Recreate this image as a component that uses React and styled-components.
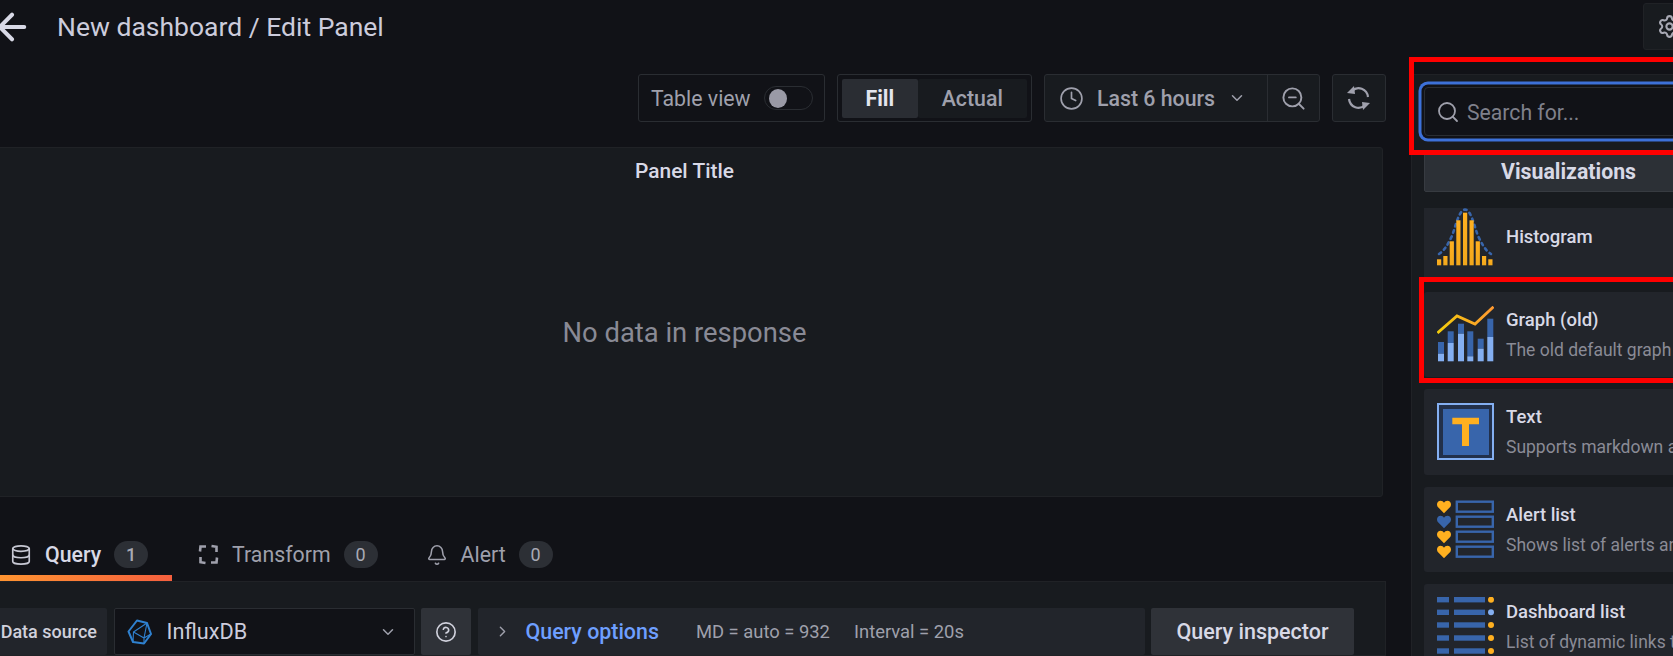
import React from "react";
import styled, { createGlobalStyle } from "styled-components";
import {
  ArrowLeft,
  Bell,
  ChevronDown,
  ChevronRight,
  Clock,
  CircleHelp,
  Database,
  Search,
  Settings,
  ZoomOut,
} from "lucide-react";

const GlobalStyle = createGlobalStyle`
  html, body {
    margin: 0;
    background: #111217;
    overflow: hidden;
  }
  * {
    box-sizing: border-box;
  }
`;

const Page = styled.div`
  position: relative;
  width: 1673px;
  height: 656px;
  overflow: hidden;
  background: #111217;
  color: #ccccdc;
  font-family: Roboto, "Liberation Sans", sans-serif;
`;

const Header = styled.header`
  display: flex;
  align-items: flex-start;
  height: 74px;
`;

const BackButton = styled.div`
  display: flex;
  margin: 6px 24px 0 -9px;
  color: #d8d9e6;
`;

const Title = styled.h1`
  margin: 10px 0 0;
  font-size: 26.5px;
  font-weight: 400;
  line-height: 34px;
  color: #ccccdc;
`;

const SettingsButton = styled.div`
  display: flex;
  align-items: center;
  flex-shrink: 0;
  width: 60px;
  height: 47px;
  margin: 3px -30px 0 auto;
  padding-left: 13px;
  background: #181b1f;
  border: 1px solid #202226;
  border-radius: 3px;
  color: #a8a9b4;
`;

const Main = styled.div`
  display: flex;
  gap: 25px;
  height: 582px;
`;

const LeftColumn = styled.div`
  display: flex;
  flex-direction: column;
  flex-shrink: 0;
  width: 1400px;
  margin-left: -14px;
`;

const Toolbar = styled.div`
  display: flex;
  justify-content: flex-end;
  gap: 12px;
  height: 48px;
  margin-bottom: 25px;
`;

const ToolBox = styled.div`
  display: flex;
  align-items: center;
  width: ${(p) => p.$width}px;
  background: #181b1f;
  border: 1px solid #2a2d32;
  border-radius: 3px;
  font-size: 21.3px;
  font-weight: 500;
  color: #9fa0ac;
`;

const TableView = styled(ToolBox)`
  padding-left: 12px;
  background: #111217;
  font-weight: 400;
`;

const Switch = styled.div`
  display: flex;
  align-items: center;
  width: 49px;
  height: 24px;
  margin-left: 13px;
  padding-left: 4px;
  border: 1px solid #2a2d32;
  border-radius: 12px;
  &::before {
    content: "";
    width: 18px;
    height: 19px;
    border-radius: 50%;
    background: #9a9aa6;
  }
`;

const ToggleGroup = styled(ToolBox)`
  padding: 4px;
  background: #111217;
`;

const ToggleOption = styled.div`
  display: flex;
  align-items: center;
  justify-content: center;
  width: ${(p) => (p.$active ? 76 : 110)}px;
  height: 39px;
  border-radius: 2px;
  background: ${(p) => (p.$active ? "#2a2d33" : "#181b1f")};
  color: ${(p) => (p.$active ? "#e4e5ee" : "#9fa0ac")};
  font-weight: ${(p) => (p.$active ? 700 : 500)};
`;

const TimePicker = styled.div`
  display: flex;
  align-items: center;
  gap: 13px;
  width: 223px;
  height: 100%;
  padding-left: 14px;
  border-right: 1px solid #2a2d32;
`;

const ZoomButton = styled.div`
  display: flex;
  align-items: center;
  justify-content: center;
  flex: 1;
`;

const RefreshBox = styled(ToolBox)`
  justify-content: center;
`;

const Panel = styled.section`
  height: 349.5px;
  margin-right: 3px;
  padding-top: 11px;
  background: #181b1f;
  border: 1px solid #202226;
  border-radius: 3px;
  text-align: center;
`;

const PanelTitle = styled.div`
  font-size: 20.9px;
  font-weight: 500;
  line-height: 24px;
  color: #d8d9e6;
`;

const NoData = styled.div`
  margin-top: 134px;
  font-size: 27.4px;
  line-height: 32px;
  color: #898a95;
`;

const TabBar = styled.nav`
  display: flex;
  align-items: flex-end;
  gap: 4px;
  height: 84.5px;
  padding-left: 2px;
`;

const Tab = styled.div`
  display: flex;
  align-items: center;
  height: 47px;
  padding: 0 ${(p) => (p.$active ? 24 : 22)}px 0 22px;
  border-bottom: 6px solid transparent;
  border-image: ${(p) =>
    p.$active ? "linear-gradient(90deg, #ff9830, #f55f3e) 1" : "none"};
  font-size: 21.3px;
  font-weight: ${(p) => (p.$active ? 500 : 400)};
  color: ${(p) => (p.$active ? "#d8d9e6" : "#9fa0ac")};
  svg {
    margin-right: 13px;
    color: ${(p) => (p.$active ? "#c8c9d4" : "#9fa0ac")};
  }
`;

const Badge = styled.span`
  display: flex;
  align-items: center;
  justify-content: center;
  width: 34px;
  height: 27px;
  margin-left: 13px;
  border-radius: 14px;
  background: #2c2f35;
  font-size: 18px;
  color: #a9aab5;
`;

const TabContent = styled.div`
  flex: 1;
  padding: 26px 31px 0 1px;
  background: #181b1f;
  border: 1px solid #202226;
`;

const QueryRow = styled.div`
  display: flex;
  gap: 6.5px;
  height: 47px;
  font-size: 18px;
`;

const SourceLabel = styled.div`
  display: flex;
  align-items: center;
  justify-content: flex-end;
  width: 119px;
  padding-right: 10px;
  background: #22252b;
  border-radius: 2px;
  font-weight: 500;
  color: #d0d1dc;
`;

const SourceSelect = styled.div`
  display: flex;
  align-items: center;
  width: 301px;
  padding: 0 17px 0 12px;
  background: #111217;
  border: 1px solid #2a2d32;
  border-radius: 2px;
  font-size: 21.7px;
  color: #ccccdc;
  span {
    margin-left: 15px;
    flex: 1;
  }
`;

const HelpButton = styled.div`
  display: flex;
  align-items: center;
  justify-content: center;
  width: 50px;
  background: #2f3238;
  border-radius: 2px;
  color: #d0d1dc;
`;

const QueryOptions = styled.div`
  display: flex;
  align-items: center;
  flex: 1;
  padding-left: 16px;
  background: #22252b;
  border-radius: 2px;
  color: #9fa0ac;
`;

const OptionsLink = styled.span`
  margin: 0 37px 0 15px;
  font-size: 21.4px;
  font-weight: 500;
  color: #6e9fff;
`;

const OptionsInfo = styled.span`
  margin-right: 24px;
  font-size: 18.4px;
  color: #9fa0ac;
`;

const InspectorButton = styled.div`
  display: flex;
  align-items: center;
  justify-content: center;
  width: 203px;
  background: #2f3238;
  border-radius: 2px;
  font-size: 21.5px;
  font-weight: 500;
  color: #d8d9e6;
`;

const Sidebar = styled.aside`
  flex-shrink: 0;
  width: 320px;
  padding: 12px 0 0 12px;
  background: #181b1f;
  border-top: 1px solid #202226;
  border-left: 1px solid #202226;
`;

const SearchBox = styled.div`
  display: flex;
  align-items: center;
  height: 49px;
  padding: 1px 0 0 11px;
  background: #111217;
  border: 1px solid #2a2d32;
  border-radius: 4px;
  box-shadow: 0 0 0 2.5px #111217, 0 0 0 5.5px #3d71d9;
  font-size: 21.2px;
  color: #7f808b;
  svg {
    margin-right: 7px;
    color: #9fa0ac;
  }
`;

const VizTab = styled.div`
  display: flex;
  align-items: center;
  justify-content: center;
  width: 289px;
  height: 39px;
  margin-top: 17px;
  padding-bottom: 2px;
  background: #2c3036;
  border: 1px solid #373b41;
  border-radius: 2px;
  font-size: 21.3px;
  font-weight: 700;
  color: #d8d9e6;
`;

const CardViewport = styled.div`
  height: 448px;
  margin-top: 16px;
  overflow: hidden;
`;

const CardList = styled.div`
  display: flex;
  flex-direction: column;
  gap: 12px;
  margin-top: -14px;
`;

const Card = styled.div`
  display: flex;
  align-items: center;
  flex-shrink: 0;
  height: 85.5px;
  padding-left: 13px;
  background: #22252b;
  border-radius: 3px;
  svg {
    flex-shrink: 0;
    margin-right: 12px;
  }
`;

const CardName = styled.div`
  font-size: 18.5px;
  font-weight: 500;
  line-height: 24px;
  color: #d8d9e6;
`;

const CardDesc = styled.div`
  margin-top: 7px;
  font-size: 17.5px;
  line-height: 22px;
  white-space: nowrap;
  color: #8a8b96;
`;

// the red boxes somebody drew on top of the screenshot
const Highlight = styled.div`
  position: absolute;
  top: ${(p) => p.$top}px;
  left: ${(p) => p.$left}px;
  width: 320px;
  height: ${(p) => p.$height}px;
  border: 5px solid #ff0000;
  pointer-events: none;
`;

const HistogramIcon = () => {
  const xs = [2, 8.3, 14.7, 21.3, 28, 34.5, 40.7, 47, 53.3];
  const tops = [51.3, 48, 33.3, 12.3, 4.7, 12.3, 33.3, 48, 51.3];
  return (
    <svg width="57" height="58" viewBox="0 0 57 58">
      <defs>
        <linearGradient id="histFill" x1="0" y1="0" x2="0" y2="1">
          <stop offset="0" stopColor="#ffb020" />
          <stop offset="1" stopColor="#f2a81c" />
        </linearGradient>
      </defs>
      <path
        d="M2 46 C8 42 11 36 15 28 C19 17 22 2 28 1.5 C34 2 37 17 41 28 C45 36 48 42 54 46"
        fill="none"
        stroke="#3865ab"
        strokeWidth="2.6"
        strokeLinecap="round"
        strokeDasharray="2.5 4"
      />
      {xs.map((x, i) => (
        <rect key={x} x={x - 2} y={tops[i]} width="4.2" height={57.3 - tops[i]} fill="url(#histFill)" />
      ))}
    </svg>
  );
};

const GraphIcon = () => {
  const bars = [
    [4, 36, 47.7],
    [13.7, 25.3, 37],
    [24, 17.7, 27.7],
    [33.3, 25.3, 50.3],
    [43.7, 32.7, 42.7],
    [53.3, 12.7, 31],
  ];
  return (
    <svg width="57" height="56" viewBox="0 0 57 56">
      <defs>
        <linearGradient id="graphLine" x1="0" y1="0" x2="1" y2="0">
          <stop offset="0" stopColor="#f2cc0c" />
          <stop offset="1" stopColor="#ff9830" />
        </linearGradient>
      </defs>
      {bars.map(([x, top, light]) => (
        <g key={x}>
          <rect x={x - 3} y={top} width="6" height={light - top} fill="#3865ab" />
          <rect x={x - 3} y={light} width="6" height={55.3 - light} fill="#84aff1" />
        </g>
      ))}
      <path d="M0.5 27 L20 10 L38 18 L56.5 0.8" fill="none" stroke="url(#graphLine)" strokeWidth="2.8" />
    </svg>
  );
};

const TextIcon = () => (
  <svg width="57" height="57" viewBox="0 0 57 57">
    <rect x="1" y="1" width="55" height="55" fill="#22304a" stroke="#84aff1" strokeWidth="2" />
    <rect x="6" y="6" width="46" height="46" fill="#3865ab" />
    <path d="M15.3 14.7 H42 V21.3 H32 V43 H25 V21.3 H15.3 Z" fill="#ffb020" />
  </svg>
);

const Heart = ({ y, color }) => (
  <path
    d={`M7 ${y + 6.5} L0.6 ${y} C-1 ${y - 3} 0.8 ${y - 6} 3.6 ${y - 6} C5 ${y - 6} 6.4 ${y - 5.2} 7 ${y - 4} C7.6 ${y - 5.2} 9 ${y - 6} 10.4 ${y - 6} C13.2 ${y - 6} 15 ${y - 3} 13.4 ${y} Z`}
    fill={color}
  />
);

const AlertListIcon = () => (
  <svg width="57" height="58" viewBox="0 0 57 58">
    {[6.7, 21.7, 36.7, 51.7].map((y, i) => (
      <g key={y}>
        <Heart y={y} color={i === 1 ? "#3865ab" : "#ffb020"} />
        <rect x="19.8" y={y - 5} width="36" height="10" fill="none" stroke="#3865ab" strokeWidth="2.4" />
      </g>
    ))}
  </svg>
);

const DashListIcon = () => (
  <svg width="57" height="60" viewBox="0 0 57 60">
    {[2.7, 15.3, 28, 41, 54].map((y, i) => (
      <g key={y}>
        <rect x="0" y={y - 2.7} width="12" height="5.4" fill="#3865ab" />
        <rect x="17" y={y - 2.7} width="31" height="5.4" fill="#3865ab" />
        <circle cx="54" cy={y} r="3" fill={i === 1 ? "#84aff1" : "#ffb020"} />
      </g>
    ))}
  </svg>
);

const TransformIcon = () => (
  <svg width="21" height="21" viewBox="0 0 21 21" fill="none" stroke="currentColor" strokeWidth="2.6">
    <path d="M2 7.5 L2.5 2.5 H8" />
    <path d="M13.5 2 L18.5 2.8 V8" />
    <path d="M19 13.5 L18.5 18.5 H13" />
    <path d="M7.5 19 L2.5 18.2 V13" />
  </svg>
);

const InfluxIcon = () => (
  <svg width="25" height="26" viewBox="0 0 25 26" fill="none" stroke="#2f81d0" strokeWidth="2" strokeLinejoin="round">
    <path d="M10 1.5 L20 4 L24 15 L17 24.5 L6 23 L1.5 12.5 Z" />
    <path d="M6.5 13 L17 19 L20 4 Z M6.5 13 L6 23 M17 19 L17 24.5 M17 19 L24 15" strokeWidth="1.1" />
  </svg>
);

const SyncIcon = () => (
  <svg width="26" height="27" viewBox="0 0 26 27" fill="none" stroke="#9fa0ac" strokeWidth="2.2">
    <path d="M22 12 A9.5 10 0 0 0 6 6" />
    <path d="M3 14 A9.5 10 0 0 0 19 20" />
    <path d="M1 8 L8 1 L9 9 Z" fill="#9fa0ac" stroke="none" />
    <path d="M24 18 L17 25 L16 17 Z" fill="#9fa0ac" stroke="none" />
  </svg>
);

const cards = [
  { name: "Histogram", icon: <HistogramIcon /> },
  { name: "Graph (old)", desc: "The old default graph panel", icon: <GraphIcon /> },
  { name: "Text", desc: "Supports markdown and html content", icon: <TextIcon /> },
  { name: "Alert list", desc: "Shows list of alerts and their current status", icon: <AlertListIcon /> },
  { name: "Dashboard list", desc: "List of dynamic links to other dashboards", icon: <DashListIcon /> },
];

const App = () => {
  return (
    <Page>
      <GlobalStyle />
      <Header>
        <BackButton>
          <ArrowLeft size={42} strokeWidth={2.3} />
        </BackButton>
        <Title>New dashboard / Edit Panel</Title>
        <SettingsButton>
          <Settings size={25} />
        </SettingsButton>
      </Header>
      <Main>
        <LeftColumn>
          <Toolbar>
            <TableView $width={187}>
              Table view
              <Switch />
            </TableView>
            <ToggleGroup $width={195}>
              <ToggleOption $active>Fill</ToggleOption>
              <ToggleOption>Actual</ToggleOption>
            </ToggleGroup>
            <ToolBox $width={276}>
              <TimePicker>
                <Clock size={25} strokeWidth={1.6} />
                Last 6 hours
                <ChevronDown size={18} />
              </TimePicker>
              <ZoomButton>
                <ZoomOut size={27} strokeWidth={1.7} />
              </ZoomButton>
            </ToolBox>
            <RefreshBox $width={54}>
              <SyncIcon />
            </RefreshBox>
          </Toolbar>
          <Panel>
            <PanelTitle>Panel Title</PanelTitle>
            <NoData>No data in response</NoData>
          </Panel>
          <TabBar>
            <Tab $active>
              <Database size={22} strokeWidth={1.8} />
              Query
              <Badge>1</Badge>
            </Tab>
            <Tab>
              <TransformIcon />
              Transform
              <Badge>0</Badge>
            </Tab>
            <Tab>
              <Bell size={22} strokeWidth={1.7} />
              Alert
              <Badge>0</Badge>
            </Tab>
          </TabBar>
          <TabContent>
            <QueryRow>
              <SourceLabel>Data source</SourceLabel>
              <SourceSelect>
                <InfluxIcon />
                <span>InfluxDB</span>
                <ChevronDown size={18} color="#9fa0ac" />
              </SourceSelect>
              <HelpButton>
                <CircleHelp size={22} strokeWidth={1.8} />
              </HelpButton>
              <QueryOptions>
                <ChevronRight size={17} />
                <OptionsLink>Query options</OptionsLink>
                <OptionsInfo>MD = auto = 932</OptionsInfo>
                <OptionsInfo>Interval = 20s</OptionsInfo>
              </QueryOptions>
              <InspectorButton>Query inspector</InspectorButton>
            </QueryRow>
          </TabContent>
        </LeftColumn>
        <Sidebar>
          <SearchBox>
            <Search size={24} strokeWidth={1.8} />
            Search for...
          </SearchBox>
          <VizTab>Visualizations</VizTab>
          <CardViewport>
            <CardList>
              {cards.map((card) => (
                <Card key={card.name}>
                  {card.icon}
                  <div>
                    <CardName>{card.name}</CardName>
                    {card.desc && <CardDesc>{card.desc}</CardDesc>}
                  </div>
                </Card>
              ))}
            </CardList>
          </CardViewport>
        </Sidebar>
      </Main>
      <Highlight $top={57} $left={1409} $height={98} />
      <Highlight $top={277} $left={1419} $height={106} />
    </Page>
  );
};

export default App;
